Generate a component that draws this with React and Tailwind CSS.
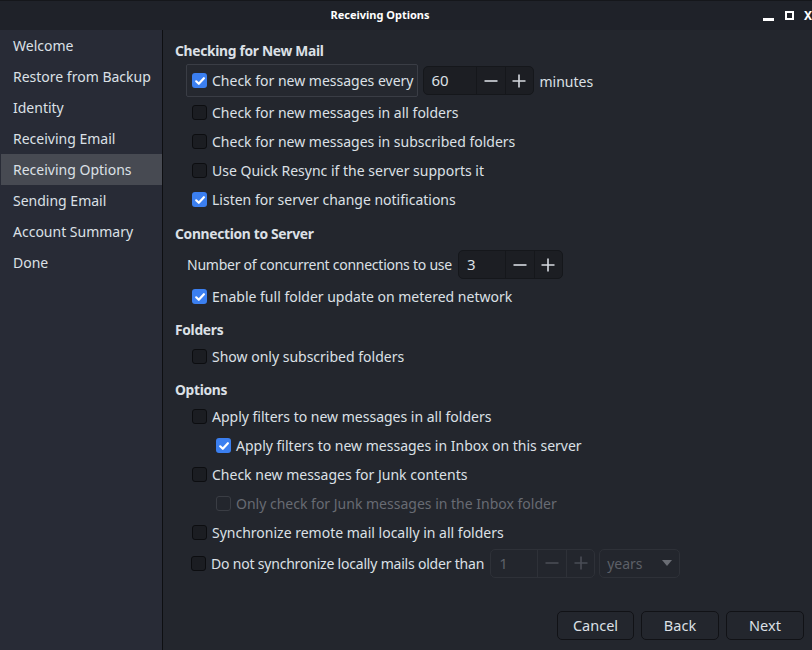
import React from 'react';

const SIDEBAR = [
  'Welcome',
  'Restore from Backup',
  'Identity',
  'Receiving Email',
  'Receiving Options',
  'Sending Email',
  'Account Summary',
  'Done',
];

/* ── Case à cocher ── */
function Check({ checked, disabled }) {
  if (checked) {
    return (
      <span className="w-[15px] h-[15px] rounded-[3px] bg-[#3b7ff0] flex items-center justify-center flex-shrink-0">
        <svg className="w-[12px] h-[12px]" viewBox="0 0 12 12" fill="none">
          <path d="M2.2 6.3 L4.8 8.8 L9.9 3.2" stroke="#fff" strokeWidth="2.2" strokeLinecap="round" strokeLinejoin="round" />
        </svg>
      </span>
    );
  }
  return (
    <span
      className={`w-[15px] h-[15px] rounded-[3px] border flex-shrink-0 ${
        disabled ? 'border-[#3a3d44] bg-[#23262d]' : 'border-[#0c0d10] bg-[#1b1d22]'
      }`}
    />
  );
}

function Minus({ dim }) {
  return (
    <svg className="w-[16px] h-[16px]" viewBox="0 0 16 16">
      <path d="M1.5 8 H14.5" stroke={dim ? '#4a4d55' : '#d6dae0'} strokeWidth="1.6" />
    </svg>
  );
}

function Plus({ dim }) {
  return (
    <svg className="w-[16px] h-[16px]" viewBox="0 0 16 16">
      <path d="M1.5 8 H14.5 M8 1.5 V14.5" stroke={dim ? '#4a4d55' : '#d6dae0'} strokeWidth="1.6" />
    </svg>
  );
}

/* ── Champ numérique ── */
function Spin({ value, inputW, disabled }) {
  return (
    <div
      className={`flex h-[29px] rounded-[5px] border text-[15px] ${
        disabled ? 'border-[#2e3138] bg-[#23262d] text-[#5d6068]' : 'border-[#15171b] bg-[#1c1e23] text-[#dce0e6]'
      }`}
    >
      <div className={`${inputW} flex items-center pl-[8px]`}>{value}</div>
      <div className={`w-[29px] flex items-center justify-center border-l ${disabled ? 'border-[#2e3138]' : 'border-[#15171b]'}`}>
        <Minus dim={disabled} />
      </div>
      <div className={`w-[28px] flex items-center justify-center border-l ${disabled ? 'border-[#2e3138]' : 'border-[#15171b]'}`}>
        <Plus dim={disabled} />
      </div>
    </div>
  );
}

function Row({ checked, disabled, indent, children, h = 'h-[29px]' }) {
  return (
    <div className={`flex items-center ${h} ${indent ? 'pl-[53px]' : 'pl-[29px]'}`}>
      <Check checked={checked} disabled={disabled} />
      <span className={`ml-[5px] ${disabled ? 'text-[#686b73]' : ''}`}>{children}</span>
    </div>
  );
}

function Header({ children, mt }) {
  return (
    <div className={`h-[20px] flex items-center pl-[12px] pt-[2px] font-bold text-[13.8px] tracking-[-0.3px] ${mt}`}>
      {children}
    </div>
  );
}

function Button({ children, w }) {
  return (
    <button className={`${w} h-[29px] rounded-[5px] border border-[#111216] bg-[#23262d] text-[#dce0e6] text-[14.5px]`}>
      {children}
    </button>
  );
}

export default function App() {
  return (
    <div
      className="w-[812px] h-[650px] flex flex-col bg-[#23262d] text-[#dce0e6] text-[14px] overflow-hidden"
      style={{ fontFamily: '"Noto Sans", "Open Sans", sans-serif' }}
    >
      {/* Barre de titre */}
      <div className="h-[30px] flex-shrink-0 relative flex items-center justify-center pr-[52px] bg-[#1f2229] border-t border-[#15171b]">
        <span className="text-[11px] font-bold text-white">Receiving Options</span>
        <div className="absolute right-0 top-0 h-full flex items-center">
          <span className="w-[11px] h-[3px] bg-white mt-[8px]" />
          <span className="ml-[11px] w-[9px] h-[9px] border-[2px] border-white" />
          <span className="ml-[10px] text-white font-bold text-[12px] leading-none">X</span>
        </div>
      </div>

      <div className="flex flex-1 min-h-0">
        {/* Barre latérale */}
        <div className="w-[163px] flex-shrink-0 bg-[#282b36] border-r border-[#0e0f12] pl-[1px]">
          {SIDEBAR.map((s) => (
            <div
              key={s}
              className={`h-[31px] flex items-center pl-[12px] ${s === 'Receiving Options' ? 'bg-[#474a52]' : ''}`}
            >
              {s}
            </div>
          ))}
        </div>

        <div className="flex-1 flex flex-col">
          <div className="flex-1 pt-[10px]">
            <Header>Checking for New Mail</Header>
            <div className="mt-[4px] h-[34px] flex items-start pl-[23px]">
              <div className="h-[33px] flex items-center pl-[5px] pr-[3px] border border-[#3a3d45] bg-[#25282f] rounded-[2px]">
                <Check checked />
                <span className="ml-[5px]">Check for new messages every</span>
              </div>
              <div className="ml-[5px] mt-[2px]">
                <Spin value="60" inputW="w-[52px]" />
              </div>
              <span className="ml-[6px] mt-[7px]">minutes</span>
            </div>
            <Row>Check for new messages in all folders</Row>
            <Row>Check for new messages in subscribed folders</Row>
            <Row>Use Quick Resync if the server supports it</Row>
            <Row checked>Listen for server change notifications</Row>

            <Header mt="mt-[9px]">Connection to Server</Header>
            <div className="mt-[6px] h-[31px] flex items-center pl-[24px]">
              <span className="tracking-[-0.25px]">Number of concurrent connections to use</span>
              <div className="ml-[6px]">
                <Spin value="3" inputW="w-[46px]" />
              </div>
            </div>
            <div className="mt-[2px]">
              <Row checked>Enable full folder update on metered network</Row>
            </div>

            <Header mt="mt-[8px]">Folders</Header>
            <div className="mt-[3px]">
              <Row>Show only subscribed folders</Row>
            </div>

            <Header mt="mt-[8px]">Options</Header>
            <div className="mt-[3px]">
              <Row>Apply filters to new messages in all folders</Row>
              <Row checked indent>Apply filters to new messages in Inbox on this server</Row>
              <Row>Check new messages for Junk contents</Row>
              <Row indent disabled>Only check for Junk messages in the Inbox folder</Row>
              <Row>Synchronize remote mail locally in all folders</Row>
              <div className="h-[32px] flex items-center pl-[28px]">
                <Check />
                <span className="ml-[5px] tracking-[-0.2px]">Do not synchronize locally mails older than</span>
                <div className="ml-[6px]">
                  <Spin value="1" inputW="w-[46px]" disabled />
                </div>
                <div className="ml-[4px] w-[81px] h-[29px] rounded-[5px] border border-[#2e3138] flex items-center justify-between pl-[7px] pr-[7px] text-[#5d6068]">
                  <span>years</span>
                  <svg className="w-[10px] h-[6px]" viewBox="0 0 10 6">
                    <path d="M0 0 H10 L5 6 Z" fill="#6a6d74" />
                  </svg>
                </div>
              </div>
            </div>
          </div>

          {/* Boutons */}
          <div className="h-[40px] flex-shrink-0 flex items-start justify-end gap-[7px] pr-[8px] pt-[1px]">
            <Button w="w-[77px]">Cancel</Button>
            <Button w="w-[78px]">Back</Button>
            <Button w="w-[78px]">Next</Button>
          </div>
        </div>
      </div>
    </div>
  );
}
